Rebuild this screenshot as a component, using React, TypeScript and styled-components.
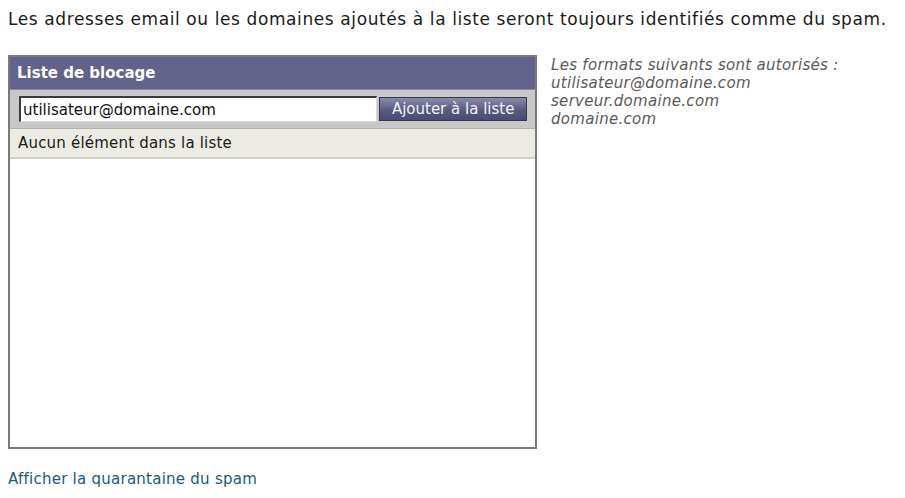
import styled, { createGlobalStyle } from 'styled-components';

const GlobalStyle = createGlobalStyle`
  body {
    margin: 8px;
    background: #fff;
    font-family: "DejaVu Sans", Verdana, sans-serif;
    color: #222;
  }
`;

const formats = ['utilisateur@domaine.com', 'serveur.domaine.com', 'domaine.com'];

const App = () => {
  return (
    <Page>
      <GlobalStyle />
      <Intro>
        Les adresses email ou les domaines ajoutés à la liste seront toujours
        identifiés comme du spam.
      </Intro>
      <Content>
        <ListBox>
          <ListHeader>Liste de blocage</ListHeader>
          <AddRow>
            <AddressInput type="text" defaultValue="utilisateur@domaine.com" />
            <AddButton type="button">Ajouter à la liste</AddButton>
          </AddRow>
          <EmptyRow>Aucun élément dans la liste</EmptyRow>
          <ListBody />
        </ListBox>
        <Hint>
          <div>Les formats suivants sont autorisés :</div>
          {formats.map((f) => (
            <div key={f}>{f}</div>
          ))}
        </Hint>
      </Content>
      <QuarantineLink href="#">Afficher la quarantaine du spam</QuarantineLink>
    </Page>
  );
};

export default App;

const Page = styled.div`
  display: flex;
  flex-direction: column;
  align-items: flex-start;
`;

const Intro = styled.p`
  margin: 1px 0 0;
  font-size: 17px;
  letter-spacing: 0.6px;
  line-height: 20px;
  color: #1a1a1a;
  white-space: nowrap;
`;

const Content = styled.div`
  display: flex;
  align-items: flex-start;
  gap: 14px;
  margin-top: 26px;
`;

const ListBox = styled.div`
  width: 525px;
  border: 2px solid #7a7a7a;
  display: flex;
  flex-direction: column;
`;

const ListHeader = styled.div`
  height: 32px;
  display: flex;
  align-items: center;
  padding-left: 7px;
  background: #62628a;
  color: #fff;
  font-weight: bold;
  font-size: 15px;
  border-bottom: 1px solid #8a8a9e;
`;

const AddRow = styled.div`
  display: flex;
  align-items: center;
  gap: 2px;
  height: 38px;
  padding: 0 8px 0 9px;
  background: #c8c8c8;
  border-bottom: 1px solid #b0b0b0;
`;

const AddressInput = styled.input`
  box-sizing: border-box;
  width: 359px;
  height: 26px;
  margin: 0;
  padding: 1px 2px;
  border-top: 2px solid #3a3a3a;
  border-left: 2px solid #3a3a3a;
  border-right: 1px solid #d8d8d8;
  border-bottom: 1px solid #d8d8d8;
  background: #fff;
  font-family: "DejaVu Sans", Verdana, sans-serif;
  font-size: 15px;
  color: #111;
  outline: none;
`;

const AddButton = styled.button`
  box-sizing: border-box;
  height: 24px;
  width: 148px;
  padding: 0;
  border: 1px solid #34344c;
  background: linear-gradient(#8a8aac, #5a5a80 55%, #4c4c72);
  color: #f2f2f8;
  font-family: "DejaVu Sans", Verdana, sans-serif;
  font-size: 15px;
  cursor: pointer;
`;

const EmptyRow = styled.div`
  height: 28px;
  display: flex;
  align-items: center;
  padding-left: 8px;
  background: #ebebe3;
  border-bottom: 2px solid #cfcfc8;
  font-size: 15px;
  letter-spacing: 0.2px;
  color: #1a1a1a;
`;

const ListBody = styled.div`
  height: 288px;
  background: #fff;
`;

const Hint = styled.div`
  font-style: italic;
  font-size: 15px;
  letter-spacing: 0.3px;
  line-height: 18px;
  color: #5a5a5a;
  margin-top: 1px;
`;

const QuarantineLink = styled.a`
  margin-top: 21px;
  font-size: 15px;
  letter-spacing: 0.25px;
  color: #24577e;
  text-decoration: none;
`;
